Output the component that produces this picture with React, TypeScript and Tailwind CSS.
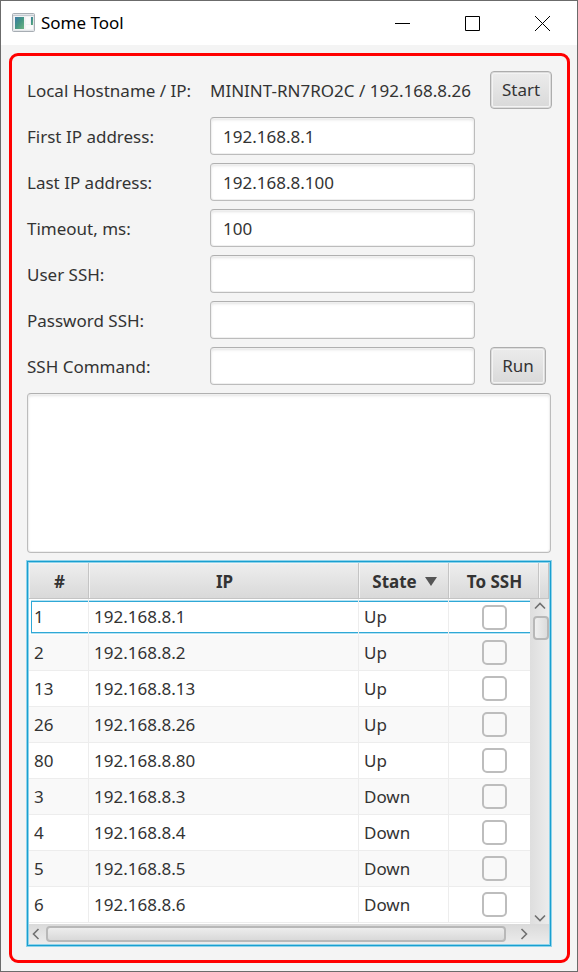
import React from "react";

const fields = [
  { id: "first", label: "First IP address:", value: "192.168.8.1", type: "text" },
  { id: "last", label: "Last IP address:", value: "192.168.8.100", type: "text" },
  { id: "timeout", label: "Timeout, ms:", value: "100", type: "text" },
  { id: "user", label: "User SSH:", value: "", type: "text" },
  { id: "password", label: "Password SSH:", value: "", type: "password" },
  { id: "command", label: "SSH Command:", value: "", type: "text", action: "Run" },
];

const rows = [
  { n: 1, state: "Up" },
  { n: 2, state: "Up" },
  { n: 13, state: "Up" },
  { n: 26, state: "Up" },
  { n: 80, state: "Up" },
  { n: 3, state: "Down" },
  { n: 4, state: "Down" },
  { n: 5, state: "Down" },
  { n: 6, state: "Down" },
];

const fieldLook =
  "rounded border border-[#bcbcbc] border-t-[#b0b0b0] bg-white shadow-[inset_0_0_0_1px_#f0f0f0,inset_0_2px_3px_#e4e4e4] outline-none";
const buttonLook =
  "h-[38px] rounded border border-[#adadad] bg-linear-to-b from-[#ececec] to-[#d9d9d9] shadow-[inset_0_0_0_1px_#dcdcdc,inset_0_0_0_2px_#f3f3f3] text-center";
const headLook =
  "h-9 border-r border-b border-[#c4c4c4] bg-linear-to-b from-[#eeeeee] to-[#d9d9d9] p-0 pt-0.5 pl-0.5 text-center font-bold shadow-[inset_1px_1px_0_#f4f4f4]";
const thumbLook = "rounded border-2 border-[#b8b8b8]";

function Chevron({ className }: { className: string }) {
  return (
    <svg className={className} width="12" height="8" viewBox="0 0 12 8" fill="none" stroke="#707070" strokeWidth="1.6" aria-hidden="true">
      <path d="M1 6.5 6 1.5 11 6.5" />
    </svg>
  );
}

function TitleBar() {
  return (
    <header className="flex h-11 items-center bg-white pl-[11px] text-black">
      <svg width="23" height="19" viewBox="0 0 23 19" className="mb-0.5" aria-hidden="true">
        <defs>
          <linearGradient id="pane" x1="0" y1="0" x2="1" y2="1">
            <stop offset="0" stopColor="#3c79a8" />
            <stop offset="0.5" stopColor="#459684" />
            <stop offset="1" stopColor="#6fb583" />
          </linearGradient>
        </defs>
        <rect x="0.5" y="0.5" width="22" height="18" rx="1" fill="#e3e6e9" stroke="#a7adb3" />
        <path d="M1 2.5H22" stroke="#c3c9cf" />
        <rect x="2" y="3" width="19" height="14" fill="#f1f2f3" />
        <rect x="3" y="4" width="9" height="12" fill="url(#pane)" />
        <rect x="14" y="4" width="4" height="7" fill="#fafafa" />
        <rect x="14" y="12" width="7" height="4" fill="#fafafa" />
        <rect x="19" y="4" width="2" height="8" fill="url(#pane)" />
      </svg>
      <h1 className="ml-1.5 flex-1 text-[17px]">Some Tool</h1>
      <button aria-label="Minimize" className="flex h-11 w-[70px] items-center justify-center">
        <svg width="15" height="15" viewBox="0 0 15 15" stroke="#000" aria-hidden="true"><path d="M0 7.5H15" /></svg>
      </button>
      <button aria-label="Maximize" className="flex h-11 w-[70px] items-center justify-center">
        <svg width="15" height="15" viewBox="0 0 15 15" fill="none" stroke="#000" aria-hidden="true"><path d="M.5.5H14.5V14.5H.5Z" /></svg>
      </button>
      <button aria-label="Close" className="flex h-11 w-[70px] items-center justify-center">
        <svg width="15" height="15" viewBox="0 0 15 15" stroke="#000" aria-hidden="true"><path d="M0 0 15 15M15 0 0 15" /></svg>
      </button>
    </header>
  );
}

function HostTable() {
  return (
    <div className="mt-2 border border-[#1a9fd0] shadow-[0_0_0_1px_#8fd3ea]">
      <div className="relative border border-[#8fd3ea] bg-white">
        <table className="w-full table-fixed border-separate border-spacing-0">
          <colgroup>
            <col className="w-[60px]" />
            <col />
            <col className="w-[90px]" />
            <col className="w-[90px]" />
            <col className="w-[10px]" />
          </colgroup>
          <thead>
            <tr>
              <th className={headLook}>#</th>
              <th className={headLook}>IP</th>
              <th className={headLook}>
                <span className="flex items-center justify-center gap-2">
                  State
                  <svg width="12" height="9" viewBox="0 0 12 9" fill="#555" aria-hidden="true"><path d="M0 0H12L6 9Z" /></svg>
                </span>
              </th>
              <th className={headLook}>To SSH</th>
              <td className={headLook}></td>
            </tr>
          </thead>
          <tbody>
            {rows.map((row, i) => {
              const selected = i === 0;
              const cell = selected
                ? "h-9 border-r border-[#ededed] p-0 py-0.5"
                : "h-9 border-r border-b border-[#ededed] p-0 py-0.5";
              const ring = selected
                ? "flex h-8 items-center border-y border-[#2fa8d6] shadow-[0_-1px_0_#b5e2f2,0_1px_0_#b5e2f2]"
                : "flex h-[31px] items-center";
              return (
                <tr key={row.n} className={i % 2 ? "bg-[#f9f9f9]" : "bg-white"}>
                  <td className={cell}>
                    <div className={selected ? ring + " ml-0.5 border-l pl-0.5" : ring + " pl-[5px]"}>{row.n}</div>
                  </td>
                  <td className={cell}><div className={ring + " pl-[5px]"}>192.168.8.{row.n}</div></td>
                  <td className={cell}><div className={ring + " pl-[5px]"}>{row.state}</div></td>
                  <td className={cell}>
                    <div className={ring + " justify-center pl-0.5"}>
                      <input
                        type="checkbox"
                        aria-label={"To SSH 192.168.8." + row.n}
                        className="size-[25px] appearance-none rounded-[5px] border-2 border-[#bdbdbd] bg-transparent"
                      />
                    </div>
                  </td>
                  <td className={cell}></td>
                </tr>
              );
            })}
          </tbody>
        </table>
        <div className="absolute top-9 right-0 bottom-5 flex w-[19px] flex-col items-end bg-linear-to-r from-[#dedede] to-[#ececec] pt-[3px] pb-0.5">
          <Chevron className="mr-[3px]" />
          <div className={thumbLook + " mt-1.5 h-6 w-4 bg-linear-to-r from-[#f0f0f0] to-[#dcdcdc]"} />
          <Chevron className="mt-auto mr-[3px] rotate-180" />
        </div>
        <div className="mt-px flex h-5 items-center bg-linear-to-b from-[#dadada] to-[#ececec] pr-[19px] pl-px">
          <Chevron className="-rotate-90" />
          <div className={thumbLook + " ml-1 h-4 flex-1 bg-linear-to-b from-[#ededed] to-[#d9d9d9]"} />
          <Chevron className="ml-3 rotate-90" />
        </div>
      </div>
    </div>
  );
}

export default function App() {
  return (
    <div className="border border-[#6b6b6b] bg-[#f4f4f4] font-['Noto_Sans',sans-serif] text-[17px] leading-6 text-[#333]">
      <TitleBar />
      <main className="mt-2 mr-[7px] mb-2 ml-2 rounded-[9px] border-3 border-[#ff0000] pt-[15px] pr-4 pb-3.5 pl-[15px]">
        <form className="grid grid-cols-[168px_minmax(0,1fr)_61px] items-center gap-x-[15px] gap-y-2">
          <span className="pt-0.5">Local Hostname / IP:</span>
          <output className="pt-0.5 whitespace-nowrap">MININT-RN7RO2C / 192.168.8.26</output>
          <button type="button" className={buttonLook + " w-[62px]"}>Start</button>
          {fields.map((f) => (
            <React.Fragment key={f.id}>
              <label htmlFor={f.id} className="pt-0.5">{f.label}</label>
              <input id={f.id} type={f.type} defaultValue={f.value} className={fieldLook + " h-[38px] w-full px-3"} />
              {f.action ? <button type="button" className={buttonLook + " w-[56px]"}>{f.action}</button> : <span />}
            </React.Fragment>
          ))}
        </form>
        <textarea aria-label="Output" className={fieldLook + " mt-2 block h-40 w-full resize-none p-2"} />
        <HostTable />
      </main>
    </div>
  );
}
